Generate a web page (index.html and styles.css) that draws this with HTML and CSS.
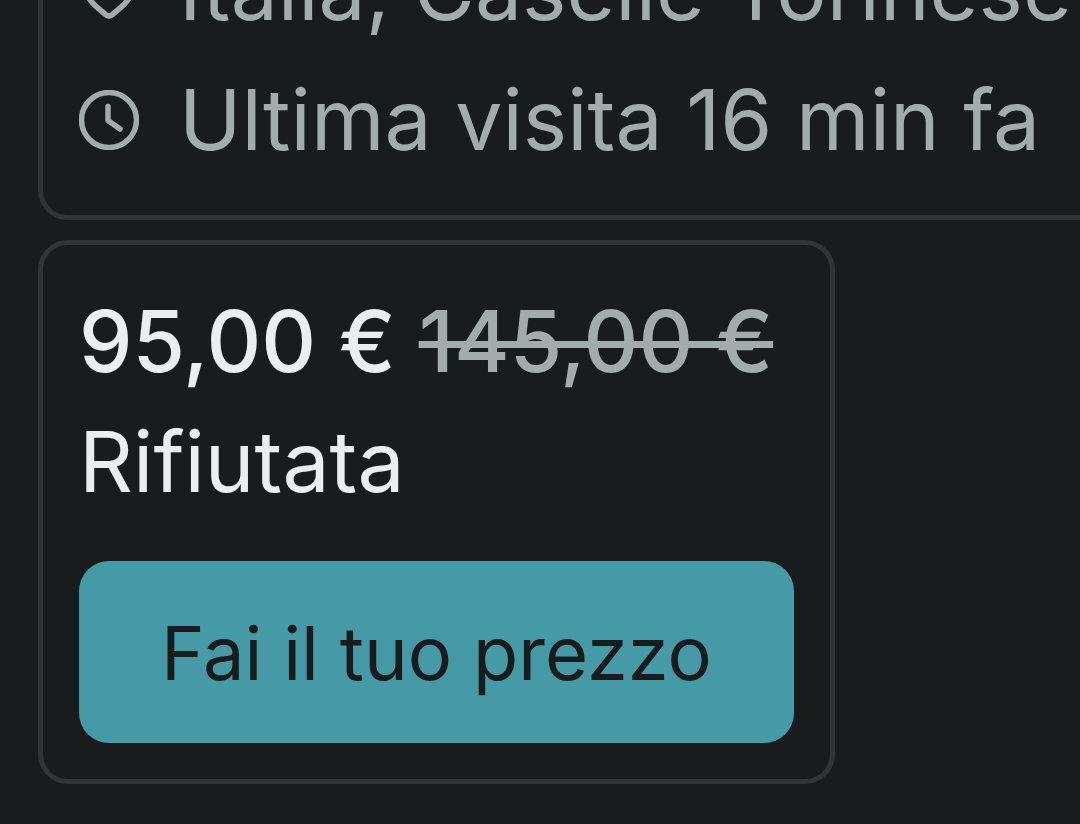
FILE: index.html
```html
<!DOCTYPE html>
<html lang="it">
<head>
    <meta charset="UTF-8">
    <meta name="viewport" content="width=device-width, initial-scale=1.0">
    <title>Offerta</title>
    <link rel="stylesheet" href="styles.css">
</head>
<body>
    <main class="chat">
        <!-- User info -->
        <section class="card user-card">
            <p class="info-row">
                <svg class="icon" viewBox="0 0 60 60" aria-hidden="true">
                    <path d="M26 54C21 50 16 46 12 41Q5 32 5 24a25 22 0 0 1 50 0Q55 32 48 41C44 46 39 50 34 54Q30 58 26 54Z"/>
                </svg>
                Italia, Caselle Torinese
            </p>
            <p class="info-row">
                <svg class="icon" viewBox="0 0 60 60" aria-hidden="true">
                    <circle cx="30" cy="30" r="27.5"/>
                    <path d="M29 16.500V30.500L41 39"/>
                </svg>
                Ultima visita 16 min fa
            </p>
        </section>

        <!-- Offer -->
        <section class="card offer-card">
            <p class="price">95,00 € <del class="old-price">145,00 €</del></p>
            <p class="status">Rifiutata</p>
            <button type="button" class="btn">Fai il tuo prezzo</button>
        </section>
    </main>
</body>
</html>
```

FILE: styles.css
```css
* {
    box-sizing: border-box;
}

body {
    margin: 0;
    background-color: #191c1d;
    color: #ebeeef;
    font-family: Inter, "Liberation Sans", sans-serif;
    font-size: 84px;
    line-height: 120px;
}

p {
    margin: 0;
}

/* Only the end of the conversation is in view */
.chat {
    display: flex;
    flex-direction: column;
    justify-content: flex-end;
    align-items: flex-start;
    gap: 20px;
    height: 100vh;
    padding: 0 0 40px 38px;
    overflow: hidden;
}

.card {
    flex: none;
    padding: 37px 36px 36px;
    border: 5px solid #303435;
    border-radius: 30px;
}

/* User info */
.user-card {
    display: flex;
    flex-direction: column;
    gap: 10px;
    width: 120%;
    padding-bottom: 35px;
    color: #a3abab;
}

.info-row {
    display: flex;
    align-items: center;
    gap: 40px;
    white-space: nowrap;
}

.icon {
    flex: none;
    width: 60px;
    height: 60px;
    fill: none;
    stroke: currentColor;
    stroke-width: 5.5;
    stroke-linecap: round;
    stroke-linejoin: round;
}

/* Offer */
.price {
    font-size: 85px;
    font-weight: 500;
    white-space: nowrap;
}

.old-price {
    color: #a3abab;
    text-decoration-thickness: 7px;
}

.btn {
    display: block;
    width: 100%;
    margin-top: 39px;
    padding: 32px 82px 30px;
    border: none;
    border-radius: 30px;
    background-color: #459aa6;
    color: #191c1d;
    font-family: inherit;
    font-size: 74px;
    line-height: 120px;
    white-space: nowrap;
    cursor: pointer;
}
```
